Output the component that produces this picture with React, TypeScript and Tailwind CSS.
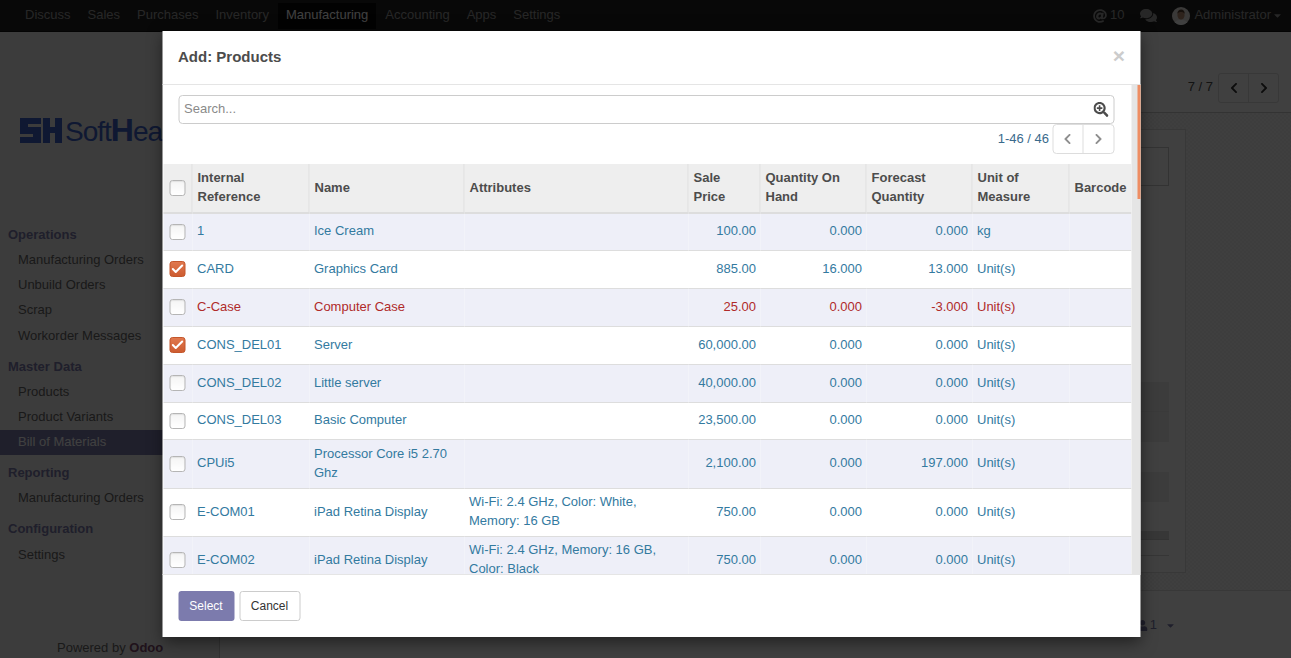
import { Check } from 'lucide-react';
import { FaAt, FaCaretDown, FaChevronLeft, FaChevronRight, FaComments, FaSearchPlus, FaUser } from 'react-icons/fa';

const apps = ['Discuss', 'Sales', 'Purchases', 'Inventory', 'Manufacturing', 'Accounting', 'Apps', 'Settings'];

const menu = [
    { title: 'Operations', items: ['Manufacturing Orders', 'Unbuild Orders', 'Scrap', 'Workorder Messages'] },
    { title: 'Master Data', items: ['Products', 'Product Variants', 'Bill of Materials'] },
    { title: 'Reporting', items: ['Manufacturing Orders'] },
    { title: 'Configuration', items: ['Settings'] }
];

interface Row {
    ref: string;
    name: string;
    attrs?: string;
    price: string;
    onHand: string;
    forecast: string;
    uom: string;
    height: string;
    checked?: boolean;
    danger?: boolean;
}

const rows: Row[] = [
    { ref: '1', name: 'Ice Cream', price: '100.00', onHand: '0.000', forecast: '0.000', uom: 'kg', height: 'h-[37px]' },
    { ref: 'CARD', name: 'Graphics Card', price: '885.00', onHand: '16.000', forecast: '13.000', uom: 'Unit(s)', height: 'h-[38px]', checked: true },
    { ref: 'C-Case', name: 'Computer Case', price: '25.00', onHand: '0.000', forecast: '-3.000', uom: 'Unit(s)', height: 'h-[38px]', danger: true },
    { ref: 'CONS_DEL01', name: 'Server', price: '60,000.00', onHand: '0.000', forecast: '0.000', uom: 'Unit(s)', height: 'h-[38px]', checked: true },
    { ref: 'CONS_DEL02', name: 'Little server', price: '40,000.00', onHand: '0.000', forecast: '0.000', uom: 'Unit(s)', height: 'h-[38px]' },
    { ref: 'CONS_DEL03', name: 'Basic Computer', price: '23,500.00', onHand: '0.000', forecast: '0.000', uom: 'Unit(s)', height: 'h-[37px]' },
    { ref: 'CPUi5', name: 'Processor Core i5 2.70 Ghz', price: '2,100.00', onHand: '0.000', forecast: '197.000', uom: 'Unit(s)', height: 'h-[49px]' },
    { ref: 'E-COM01', name: 'iPad Retina Display', attrs: 'Wi-Fi: 2.4 GHz, Color: White, Memory: 16 GB', price: '750.00', onHand: '0.000', forecast: '0.000', uom: 'Unit(s)', height: 'h-[48px]' },
    { ref: 'E-COM02', name: 'iPad Retina Display', attrs: 'Wi-Fi: 2.4 GHz, Memory: 16 GB, Color: Black', price: '750.00', onHand: '0.000', forecast: '0.000', uom: 'Unit(s)', height: 'h-[48px]' }
];

function Checkbox({ checked }: { checked?: boolean }) {
    if (checked) {
        return (
            <span className="flex h-4 w-4 items-center justify-center rounded-[3px] border border-[#c4572c] bg-gradient-to-b from-[#e0784e] to-[#cd5c30]">
                <Check className="h-3.5 w-3.5 text-white" strokeWidth={3.5} />
            </span>
        );
    }
    return <span className="block h-4 w-4 rounded-[3px] border border-[#b5b5b5] bg-gradient-to-b from-[#f4f4f4] to-white shadow-[inset_0_1px_1px_rgba(0,0,0,0.08)]" />;
}

function HeadCell({ children, right }: { children?: React.ReactNode; right?: boolean }) {
    return (
        <th className={`border-l border-b-2 border-[#dddddd] px-[5px] py-[5px] text-left align-middle font-bold text-[#4c4c4c] ${right ? 'border-b-2' : ''}`}>
            {children}
        </th>
    );
}

function Avatar() {
    return (
        <svg viewBox="0 0 18 18" className="h-[18px] w-[18px] rounded-full">
            <rect width="18" height="18" fill="#e8e4e0" />
            <path d="M2 18c.5-4 3-5 7-5s6.500 1 7 5z" fill="#ffffff" />
            <ellipse cx="9" cy="8" rx="3.600" ry="4.600" fill="#b98a70" />
            <path d="M5.300 7c0-3 1.700-4.500 3.900-4.500S12.800 4 12.700 7C12 5.500 10.500 5 9 5S6 5.500 5.300 7z" fill="#5a4030" />
        </svg>
    );
}

export default function App() {
    return (
        <div className="relative h-screen overflow-hidden bg-white text-[13px] leading-[18.57px] text-[#4c4c4c] [font-family:'Liberation_Sans',Arial,sans-serif]">
            {/* Top bar */}
            <nav className="flex h-8 items-center border-b border-[#111111] bg-[#222222] pl-[17px] pr-[8px] text-[#9d9d9d]">
                {apps.map((app) => (
                    <span
                        key={app}
                        className={`mr-[1px] flex h-[26px] items-center px-2 ${app === 'Manufacturing' ? 'bg-[#080808] text-[#ffffff]' : ''}`}
                    >
                        {app}
                    </span>
                ))}
                <div className="ml-auto flex items-center">
                    <FaAt className="mr-[3px] h-[14px] w-[14px]" />
                    <span>10</span>
                    <FaComments className="ml-[16px] h-[17px] w-[17px]" />
                    <span className="ml-[15px]"><Avatar /></span>
                    <span className="ml-1">Administrator</span>
                    <FaCaretDown className="ml-[1px] h-[11px] w-[11px]" />
                </div>
            </nav>

            <div className="flex h-[626px]">
                {/* Sidebar */}
                <aside className="flex w-[220px] shrink-0 flex-col overflow-hidden border-r border-[#cccccc] bg-[#f0eeee]">
                    <div className="flex h-[205px] items-start pl-5 pt-[86px]">
                        <svg viewBox="0 0 42 25" className="h-[25px] w-[42px] shrink-0" fill="#3c62c8">
                            <path d="M0 0h21v6H8v3h13v16H0v-6h13v-3H0z" />
                            <path d="M23 0h7v9h5V0h7v25h-7V15h-5v10h-7z" />
                        </svg>
                        <span className="ml-[3px] whitespace-nowrap text-[28px] leading-[25px] tracking-[-1px] text-[#3c62c8]">
                            Soft<span className="text-[32px] font-bold">H</span>ealer
                        </span>
                    </div>
                    {menu.map((group) => (
                        <div key={group.title} className="mb-[6px]">
                            <div className="flex h-[25px] items-center pl-2 font-bold text-[#7c7bad]">{group.title}</div>
                            {group.items.map((item) => (
                                <div
                                    key={item}
                                    className={`flex h-[25.2px] items-center pl-[18px] ${item === 'Bill of Materials' ? 'bg-[#7c7bad] text-white' : 'text-[#666666]'}`}
                                >
                                    {item}
                                </div>
                            ))}
                        </div>
                    ))}
                    <div className="mt-[66px] pl-[57px] text-[#666666]">
                        Powered by <span className="font-bold text-[#7c4a6b]">Odoo</span>
                    </div>
                </aside>

                {/* Main area behind the dialog */}
                <main className="flex min-w-0 flex-1 flex-col">
                    <div className="flex h-[81px] shrink-0 justify-end border-b border-[#cccccc] pr-3 pt-[41px]">
                        <span className="mr-[5px] mt-[5px]">7 / 7</span>
                        <div className="flex h-[30px] rounded-[3px] border border-[#dddddd] text-[#333333]">
                            <span className="flex w-[30px] items-center justify-center border-r border-[#dddddd]"><FaChevronLeft className="h-3 w-3" /></span>
                            <span className="flex w-[29px] items-center justify-center"><FaChevronRight className="h-3 w-3" /></span>
                        </div>
                    </div>
                    <div className="flex min-h-0 flex-1 justify-end bg-[repeating-conic-gradient(#f2f2f2_0_25%,#fafafa_0_50%)] bg-[length:4px_4px] pr-[105px] pt-[16px]">
                        <div className="flex h-[444px] w-[861px] flex-col border border-[#dddddd] bg-white pr-4 pt-[17px]">
                            <div className="h-[39px] w-full border border-[#cccccc]" />
                            <div className="mt-[196px] h-[30px] w-full border-b border-[#e5e5e5] bg-[#f0f0f0]" />
                            <div className="h-[30px] w-full bg-[#f0f0f0]" />
                            <div className="mt-[30px] h-[30px] w-full bg-[#f0f0f0]" />
                            <div className="mt-[29px] h-[9px] w-full border-b border-[#cccccc] bg-[#dcdcdc]" />
                            <div className="mt-[15px] h-px w-full bg-[#d5d5d5]" />
                        </div>
                    </div>
                    <div className="flex h-[68px] shrink-0 items-center justify-end border-t border-[#dddddd] pr-[115px] pt-[2px] text-[#7c7bad]">
                        <FaUser className="h-[11px] w-[11px]" />
                        <span className="ml-[2px]">1</span>
                        <FaCaretDown className="ml-[8px] h-[11px] w-[11px]" />
                    </div>
                </main>
            </div>

            {/* Modal backdrop */}
            <div className="absolute inset-0 bg-black/75" />

            {/* Dialog */}
            <div className="absolute inset-x-0 top-[31px] mx-auto flex h-[606px] w-[978px] flex-col bg-white shadow-[0_5px_15px_rgba(0,0,0,0.5)] [transform:translateX(5.5px)]">
                <header className="flex h-[54px] shrink-0 items-center justify-between border-b border-[#e5e5e5] pl-4 pr-[15px]">
                    <h4 className="text-[15px] font-bold text-[#4c4c4c]">Add: Products</h4>
                    <button className="-mt-[4px] text-[21px] font-bold leading-none text-[#cccccc]">×</button>
                </header>

                <div className="flex min-h-0 flex-1 border-b border-[#e5e5e5]">
                    <div className="min-w-0 flex-1 overflow-hidden pl-px">
                        <div className="pl-[15px] pr-[17px] pt-[10px]">
                            <div className="flex h-[29px] items-center justify-between rounded-[4px] border border-[#cccccc] pl-[5px] pr-[5px] text-[#8a8a8a]">
                                <span>Search...</span>
                                <FaSearchPlus className="h-[15px] w-[15px] text-[#4c4c4c]" />
                            </div>
                            <div className="flex h-[30px] items-center justify-end">
                                <span className="mr-[3px] text-[#3a6a8c]">1-46 / 46</span>
                                <div className="flex h-[30px] rounded-[4px] border border-[#dddddd] text-[#8f8f8f]">
                                    <span className="flex w-[30px] items-center justify-center border-r border-[#dddddd]"><FaChevronLeft className="h-3 w-3" /></span>
                                    <span className="flex w-[30px] items-center justify-center"><FaChevronRight className="h-3 w-3" /></span>
                                </div>
                            </div>
                        </div>
                        <table className="mt-[10px] w-[968px] table-fixed border-collapse">
                            <colgroup>
                                <col className="w-[29px]" />
                                <col className="w-[117px]" />
                                <col className="w-[155px]" />
                                <col className="w-[224px]" />
                                <col className="w-[72px]" />
                                <col className="w-[106px]" />
                                <col className="w-[106px]" />
                                <col className="w-[97px]" />
                                <col className="w-[62px]" />
                            </colgroup>
                            <thead className="bg-[#eeeeee]">
                                <tr className="h-[49px]">
                                    <th className="border-b-2 border-[#dddddd] pl-[6px]"><Checkbox /></th>
                                    <HeadCell>Internal Reference</HeadCell>
                                    <HeadCell>Name</HeadCell>
                                    <HeadCell>Attributes</HeadCell>
                                    <HeadCell>Sale Price</HeadCell>
                                    <HeadCell>Quantity On Hand</HeadCell>
                                    <HeadCell>Forecast Quantity</HeadCell>
                                    <HeadCell>Unit of Measure</HeadCell>
                                    <HeadCell>Barcode</HeadCell>
                                </tr>
                            </thead>
                            <tbody>
                                {rows.map((row, i) => (
                                    <tr
                                        key={row.ref}
                                        className={`${row.height} border-b border-[#dddddd] ${i % 2 === 0 ? 'bg-[#eeeff8]' : 'bg-white'} ${row.danger ? 'text-[#b02a2a]' : 'text-[#337a9f]'}`}
                                    >
                                        <td className="pl-[6px] align-middle"><Checkbox checked={row.checked} /></td>
                                        <td className="px-[5px] align-middle">{row.ref}</td>
                                        <td className="px-[5px] align-middle">{row.name}</td>
                                        <td className="px-[5px] align-middle">{row.attrs}</td>
                                        <td className="pl-[5px] pr-[4px] text-right align-middle">{row.price}</td>
                                        <td className="pl-[5px] pr-[4px] text-right align-middle">{row.onHand}</td>
                                        <td className="pl-[5px] pr-[4px] text-right align-middle">{row.forecast}</td>
                                        <td className="px-[5px] align-middle">{row.uom}</td>
                                        <td />
                                    </tr>
                                ))}
                            </tbody>
                        </table>
                    </div>
                    {/* Scrollbar */}
                    <div className="flex w-[9px] shrink-0 justify-end bg-[#e5e5e5]">
                        <div className="h-[114px] w-[3px] bg-[#ee8d63]" />
                    </div>
                </div>

                <footer className="flex h-[62px] shrink-0 items-start gap-[5px] pl-4 pt-[16px] text-[12px]">
                    <button className="h-[30px] w-[56px] rounded-[3px] bg-[#7c7bad] text-white">Select</button>
                    <button className="h-[30px] w-[61px] rounded-[3px] border border-[#cccccc] bg-white text-[#333333]">Cancel</button>
                </footer>
            </div>
        </div>
    );
}
